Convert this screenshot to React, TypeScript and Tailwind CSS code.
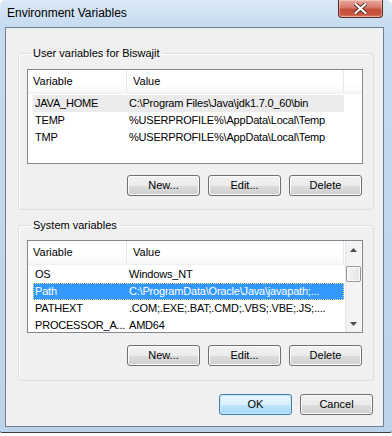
import React from 'react';

const userVars = [
  { name: 'JAVA_HOME', value: 'C:\\Program Files\\Java\\jdk1.7.0_60\\bin' },
  { name: 'TEMP', value: '%USERPROFILE%\\AppData\\Local\\Temp' },
  { name: 'TMP', value: '%USERPROFILE%\\AppData\\Local\\Temp' },
];

const systemVars = [
  { name: 'OS', value: 'Windows_NT' },
  { name: 'Path', value: 'C:\\ProgramData\\Oracle\\Java\\javapath;...' },
  { name: 'PATHEXT', value: '.COM;.EXE;.BAT;.CMD;.VBS;.VBE;.JS;....' },
  { name: 'PROCESSOR_A...', value: 'AMD64' },
];

const WinButton: React.FC<{ label: string; primary?: boolean }> = ({ label, primary }) => (
  <button
    className={`w-[73px] h-[21px] rounded-[3px] border text-[11px] text-black leading-none ${
      primary
        ? 'border-[#3c7fb1] bg-[linear-gradient(to_bottom,#eaf6fd_0%,#d9f0fc_50%,#bee6fd_51%,#a7d9f5_100%)] shadow-[inset_0_0_0_1px_#c8e8f8]'
        : 'border-[#707070] bg-[linear-gradient(to_bottom,#f2f2f2_0%,#ebebeb_50%,#dddddd_51%,#cfcfcf_100%)] shadow-[inset_0_0_0_1px_#fcfcfc]'
    }`}
  >
    {label}
  </button>
);

type Row = { name: string; value: string };

const ListView: React.FC<{
  rows: Row[];
  heightClass: string;
  selected: number;
  focused?: boolean;
  scroll?: boolean;
}> = ({ rows, heightClass, selected, focused, scroll }) => (
  <div className={`flex border border-[#828790] bg-white overflow-hidden ${heightClass}`}>
    <div className="flex-1 flex flex-col min-w-0">
      <div className="flex h-[24px] shrink-0 bg-[linear-gradient(to_bottom,#ffffff_0%,#ffffff_60%,#f6f7f8_100%)] border-b border-[#eef0f3]">
        <div className="w-[99px] pl-[5px] flex items-center border-r border-[#e3e8ee]">Variable</div>
        <div className="w-[217px] pl-[6px] flex items-center border-r border-[#e3e8ee]">Value</div>
        <div className="flex-1" />
      </div>
      <div className="flex flex-col pt-px tracking-[-0.2px]">
        {rows.map((r, i) => {
          const isSel = i === selected;
          const cls = isSel
            ? focused
              ? 'bg-[#3399ff] text-white outline outline-1 outline-dotted outline-[#f0e68c] -outline-offset-1'
              : 'bg-[#ebebeb]'
            : '';
          return (
            <div key={r.name} className={`flex h-[17px] ml-[5px] w-[311px] items-center ${cls}`}>
              <div className="w-[94px] pl-[2px] whitespace-nowrap overflow-hidden">{r.name}</div>
              <div className="flex-1 pl-[2px] whitespace-nowrap overflow-hidden">{r.value}</div>
            </div>
          );
        })}
      </div>
    </div>
    {scroll && (
      <div className="w-[17px] shrink-0 flex flex-col items-center bg-[linear-gradient(to_right,#e3e3e3_0px,#f3f3f3_2px,#f5f5f5_100%)]">
        <div className="h-[17px] w-full flex items-center justify-center">
          <svg width="7" height="4" viewBox="0 0 7 4">
            <path d="M3.5 0 L7 4 L0 4 Z" fill="#4d4d4d" />
          </svg>
        </div>
        <div className="mt-[8px] w-[15px] h-[16px] rounded-[2px] border border-[#979797] bg-[linear-gradient(to_right,#f5f5f5,#e4e4e4)] shadow-[inset_0_0_0_1px_#fbfbfb]" />
        <div className="flex-1" />
        <div className="h-[17px] w-full flex items-center justify-center">
          <svg width="7" height="4" viewBox="0 0 7 4">
            <path d="M0 0 L7 0 L3.5 4 Z" fill="#4d4d4d" />
          </svg>
        </div>
      </div>
    )}
  </div>
);

const GroupBox: React.FC<{ title: string; className?: string; children: React.ReactNode }> = ({
  title,
  className,
  children,
}) => (
  <fieldset
    className={`border border-[#d5dfe5] rounded-[3px] shadow-[inset_1px_1px_0_#ffffff] ${className ?? ''}`}
  >
    <legend className="ml-[4px] px-[2px] leading-[16px] text-[11px]">{title}</legend>
    {children}
  </fieldset>
);

export default function App() {
  return (
    <div
      className="w-[392px] h-[436px] bg-white text-[11px] text-black"
      style={{ fontFamily: '"Liberation Sans", Arial, sans-serif' }}
    >
      <div className="w-[392px] h-[433px] flex flex-col rounded-t-[6px] rounded-b-[2px] border-b border-[#3a3f45] bg-[linear-gradient(to_bottom,#dae8f6_0px,#c6dbf0_27px,#bcd3eb_100%)]">
        <div className="h-[27px] flex items-start justify-between shrink-0">
          <div className="pl-[7px] pt-[5px] text-[12px] leading-[16px] text-black">Environment Variables</div>
          <div className="mr-[9px] w-[45px] h-[18px] flex items-center justify-center rounded-b-[4px] border border-t-0 border-[#5e2b22] bg-[linear-gradient(to_bottom,#e9a99b_0%,#d5786a_45%,#c4503e_55%,#c9533f_85%,#e08a6e_100%)] shadow-[inset_0_0_0_1px_rgba(255,255,255,0.35)]">
            <svg width="13" height="11" viewBox="0 0 13 11">
              <path d="M1.5 1 L11.5 10 M11.5 1 L1.5 10" stroke="#5a2a22" strokeWidth="4" strokeLinecap="round" />
              <path d="M1.5 1 L11.5 10 M11.5 1 L1.5 10" stroke="#ffffff" strokeWidth="2.2" strokeLinecap="round" />
            </svg>
          </div>
        </div>
        <div className="ml-[5px] mr-[8px] h-[400px] border border-[#6e7f92] bg-[#f0f0f0] flex flex-col">
          <GroupBox title="User variables for Biswajit" className="mt-[17px] ml-[12px] mr-[9px] pl-[8px] pr-[10px] pb-[13px]">
            <div className="pt-[8px]">
              <ListView rows={userVars} heightClass="h-[95px]" selected={0} />
            </div>
            <div className="mt-[11px] mr-px flex justify-end gap-[8px]">
              <WinButton label="New..." />
              <WinButton label="Edit..." />
              <WinButton label="Delete" />
            </div>
          </GroupBox>
          <GroupBox title="System variables" className="mt-[7px] ml-[12px] mr-[9px] pl-[8px] pr-[10px] pb-[14px]">
            <div className="pt-[7px]">
              <ListView rows={systemVars} heightClass="h-[93px]" selected={1} focused scroll />
            </div>
            <div className="mt-[12px] mr-px flex justify-end gap-[8px]">
              <WinButton label="New..." />
              <WinButton label="Edit..." />
              <WinButton label="Delete" />
            </div>
          </GroupBox>
          <div className="mt-[13px] mr-[10px] flex justify-end gap-[8px]">
            <WinButton label="OK" primary />
            <WinButton label="Cancel" />
          </div>
        </div>
      </div>
    </div>
  );
}
